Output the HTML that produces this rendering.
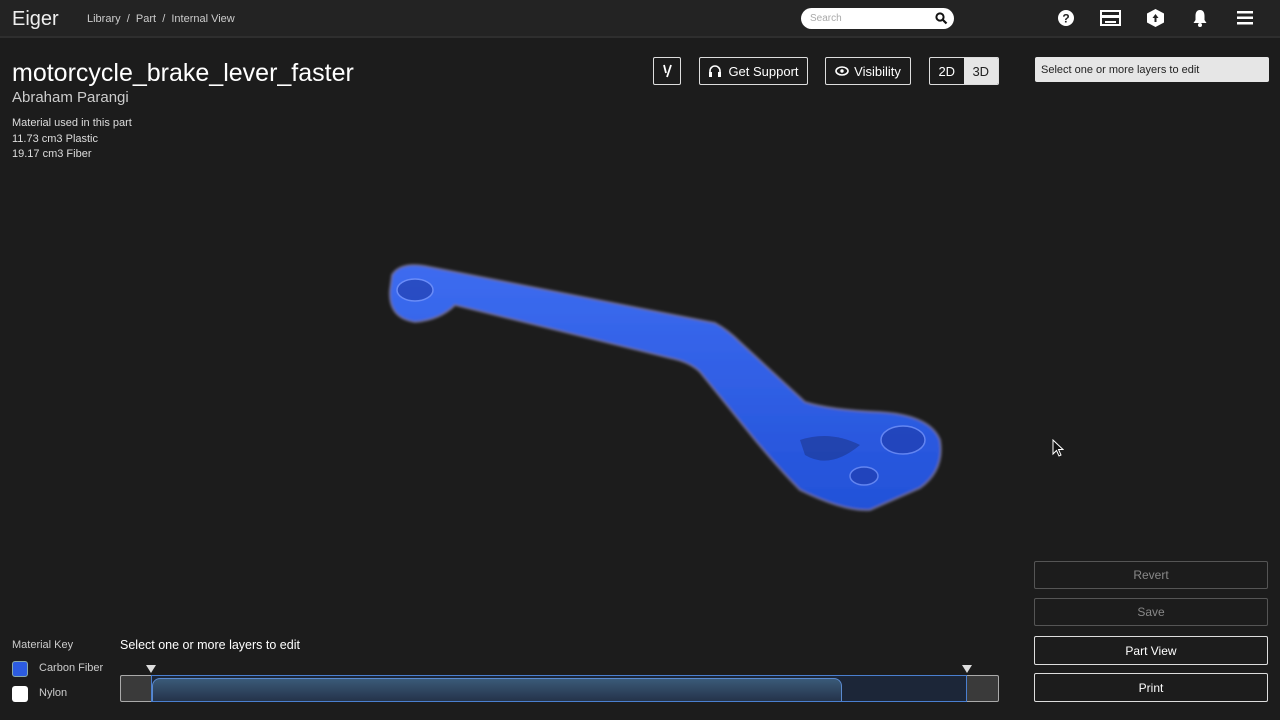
<!DOCTYPE html>
<html><head><meta charset="utf-8"><style>
*{box-sizing:border-box;margin:0;padding:0}
body{width:1280px;height:720px;background:#1c1c1c;font-family:"Liberation Sans",sans-serif;color:#fff;position:relative;overflow:hidden}
.hdr{position:absolute;left:0;top:0;width:1280px;height:38px;background:#232323;border-bottom:2px solid #2e2e2e}
.abs{position:absolute}
.btn{position:absolute;border:1px solid #ddd;border-radius:2px;height:28px;font-size:13px;display:flex;align-items:center;justify-content:center;color:#fff}
.rb{position:absolute;left:1034px;width:234px;height:28px;border:1px solid #ccc;border-radius:2px;font-size:12px;display:flex;align-items:center;justify-content:center}
</style></head><body>
<div class="hdr">
<div class="abs" style="left:12px;top:8px;font-size:20px;color:#eee">Eiger</div>
<div class="abs" style="left:87px;top:13px;font-size:11px;color:#ccc">Library &nbsp;/&nbsp; Part &nbsp;/&nbsp; Internal View</div>
<div class="abs" style="left:801px;top:8px;width:153px;height:21px;background:#fff;border-radius:11px"><span class="abs" style="left:9px;top:5px;font-size:10px;color:#aaa">Search</span>
<svg class="abs" style="left:134px;top:4px" width="13" height="13" viewBox="0 0 13 13"><circle cx="5" cy="5" r="3.6" stroke="#111" stroke-width="2" fill="none"/><path d="M8 8l3.5 3.5" stroke="#111" stroke-width="2.2"/></svg></div>
<svg class="abs" style="left:1058px;top:10px" width="16" height="16"><circle cx="8" cy="8" r="8" fill="#fff"/><text x="8" y="12.5" font-size="12" font-weight="bold" text-anchor="middle" fill="#222" font-family="Liberation Sans">?</text></svg>
<svg class="abs" style="left:1100px;top:10px" width="21" height="16"><rect x="1" y="1" width="19" height="14" fill="none" stroke="#fff" stroke-width="2"/><rect x="1" y="5" width="19" height="3" fill="#fff"/><rect x="5" y="11" width="11" height="2" fill="#fff"/></svg>
<svg class="abs" style="left:1147px;top:9px" width="17" height="18"><path d="M8.5 0L17 4.5V13.5L8.5 18L0 13.5V4.5Z" fill="#fff"/><path d="M8.5 5L5.5 9h2v4h2v-4h2z" fill="#222"/></svg>
<svg class="abs" style="left:1192px;top:9px" width="16" height="18"><path d="M8 1C4.5 1 3.5 4 3.5 7V11L1.5 14H14.5L12.5 11V7C12.5 4 11.5 1 8 1Z" fill="#fff"/><circle cx="8" cy="16" r="2" fill="#fff"/></svg>
<svg class="abs" style="left:1237px;top:11px" width="16" height="14"><rect y="0" width="16" height="2.5" fill="#fff"/><rect y="5.5" width="16" height="2.5" fill="#fff"/><rect y="11" width="16" height="2.5" fill="#fff"/></svg>
</div>
<div class="abs" style="left:12px;top:59px;font-size:25px;color:#fff">motorcycle_brake_lever_faster</div>
<div class="abs" style="left:12px;top:89px;font-size:15px;color:#ccc">Abraham Parangi</div>
<div class="abs" style="left:12px;top:116px;font-size:11px;color:#ddd;line-height:15.5px">Material used in this part<br>11.73 cm3 Plastic<br>19.17 cm3 Fiber</div>
<div class="btn" style="left:653px;top:57px;width:28px">
<svg width="12" height="14"><path d="M3 1L5 9M10 1L6 13" stroke="#fff" stroke-width="1.8" fill="none"/></svg></div>
<div class="btn" style="left:699px;top:57px;width:109px">
<svg width="14" height="14" style="margin-right:6px"><path d="M2 9V7a5 5 0 0110 0v2" stroke="#fff" stroke-width="1.6" fill="none"/><rect x="1" y="8" width="3" height="5" fill="#fff"/><rect x="10" y="8" width="3" height="5" fill="#fff"/></svg>Get Support</div>
<div class="btn" style="left:825px;top:57px;width:86px">
<svg width="14" height="10" style="margin-right:5px"><ellipse cx="7" cy="5" rx="6" ry="4" stroke="#fff" stroke-width="1.6" fill="none"/><circle cx="7" cy="5" r="1.7" fill="#fff"/></svg>Visibility</div>
<div class="btn" style="left:929px;top:57px;width:70px;justify-content:flex-start;overflow:hidden"><span style="width:34px;text-align:center">2D</span><span style="width:35px;height:28px;background:#e6e6e6;color:#222;display:flex;align-items:center;justify-content:center">3D</span></div>
<div class="abs" style="left:1035px;top:57px;width:234px;height:25px;background:#e6e6e6;border-radius:2px;color:#222;font-size:11px;padding:7px 6px">Select one or more layers to edit</div>
<svg class="abs" style="left:380px;top:255px" width="570" height="265" viewBox="380 255 570 265">
<defs><linearGradient id="g" x1="0" y1="0" x2="0" y2="1"><stop offset="0" stop-color="#3d6cf0"/><stop offset="1" stop-color="#2251d8"/></linearGradient>
<filter id="b"><feGaussianBlur stdDeviation="1.2"/></filter></defs>
<path filter="url(#b)" d="M392 275 Q400 262 425 266 L715 323 Q728 330 740 342 L805 402 Q830 410 880 412 Q930 415 940 440 Q945 470 920 488 L870 510 Q845 512 800 490 Q780 470 755 440 L700 372 Q690 362 670 358 L455 305 Q440 320 415 322 Q388 318 390 290 Z" fill="url(#g)" stroke="#6a6a8a" stroke-width="2"/>
<ellipse cx="415" cy="290" rx="18" ry="11" fill="#1e3aa8" opacity=".6" stroke="#8aa4ff" stroke-width="1.5"/>
<ellipse cx="903" cy="440" rx="22" ry="14" fill="#1e3aa8" opacity=".6" stroke="#8aa4ff" stroke-width="1.5"/>
<ellipse cx="864" cy="476" rx="14" ry="9" fill="#1e3aa8" opacity=".6" stroke="#8aa4ff" stroke-width="1.5"/>
<path d="M800 440 Q830 430 860 445 Q830 470 805 455Z" fill="#1a2f80" opacity=".5"/>
</svg>
<svg class="abs" style="left:1052px;top:439px" width="12" height="18"><path d="M1 1V15L4.5 11.5L7 17L9 16L6.5 10.5H11Z" fill="#111" stroke="#fff" stroke-width="1"/></svg>
<div class="rb" style="top:561px;color:#888;border-color:#555">Revert</div>
<div class="rb" style="top:598px;color:#888;border-color:#555">Save</div>
<div class="rb" style="top:636px;height:29px;color:#fff;border-color:#ddd">Part View</div>
<div class="rb" style="top:673px;height:29px;color:#fff;border-color:#ddd">Print</div>
<div class="abs" style="left:12px;top:639px;font-size:11px;color:#ccc">Material Key</div>
<div class="abs" style="left:12px;top:661px;width:16px;height:16px;background:#2c5ce0;border-radius:3px;border:1px solid #8aa"></div>
<div class="abs" style="left:39px;top:662px;font-size:11px;color:#ccc">Carbon Fiber</div>
<div class="abs" style="left:12px;top:686px;width:16px;height:16px;background:#fff;border-radius:3px"></div>
<div class="abs" style="left:39px;top:687px;font-size:11px;color:#ccc">Nylon</div>
<div class="abs" style="left:120px;top:638px;font-size:12.5px;color:#fff">Select one or more layers to edit</div>
<div class="abs" style="left:120px;top:675px;width:879px;height:27px;background:#3a3a3a;border:1px solid #aaa;border-radius:2px"></div>
<div class="abs" style="left:151px;top:675px;width:816px;height:27px;background:#1c2638;border:1px solid #4a7fd0"></div>
<div class="abs" style="left:152px;top:678px;width:690px;height:23px;background:linear-gradient(#3a5a78,#25334a);border:1px solid #5a8ad0;border-radius:8px 8px 0 0;border-bottom:none"></div>
<svg class="abs" style="left:146px;top:665px" width="10" height="9"><path d="M0 0H10L5 8Z" fill="#ddd"/></svg>
<svg class="abs" style="left:962px;top:665px" width="10" height="9"><path d="M0 0H10L5 8Z" fill="#ddd"/></svg>
</body></html>
